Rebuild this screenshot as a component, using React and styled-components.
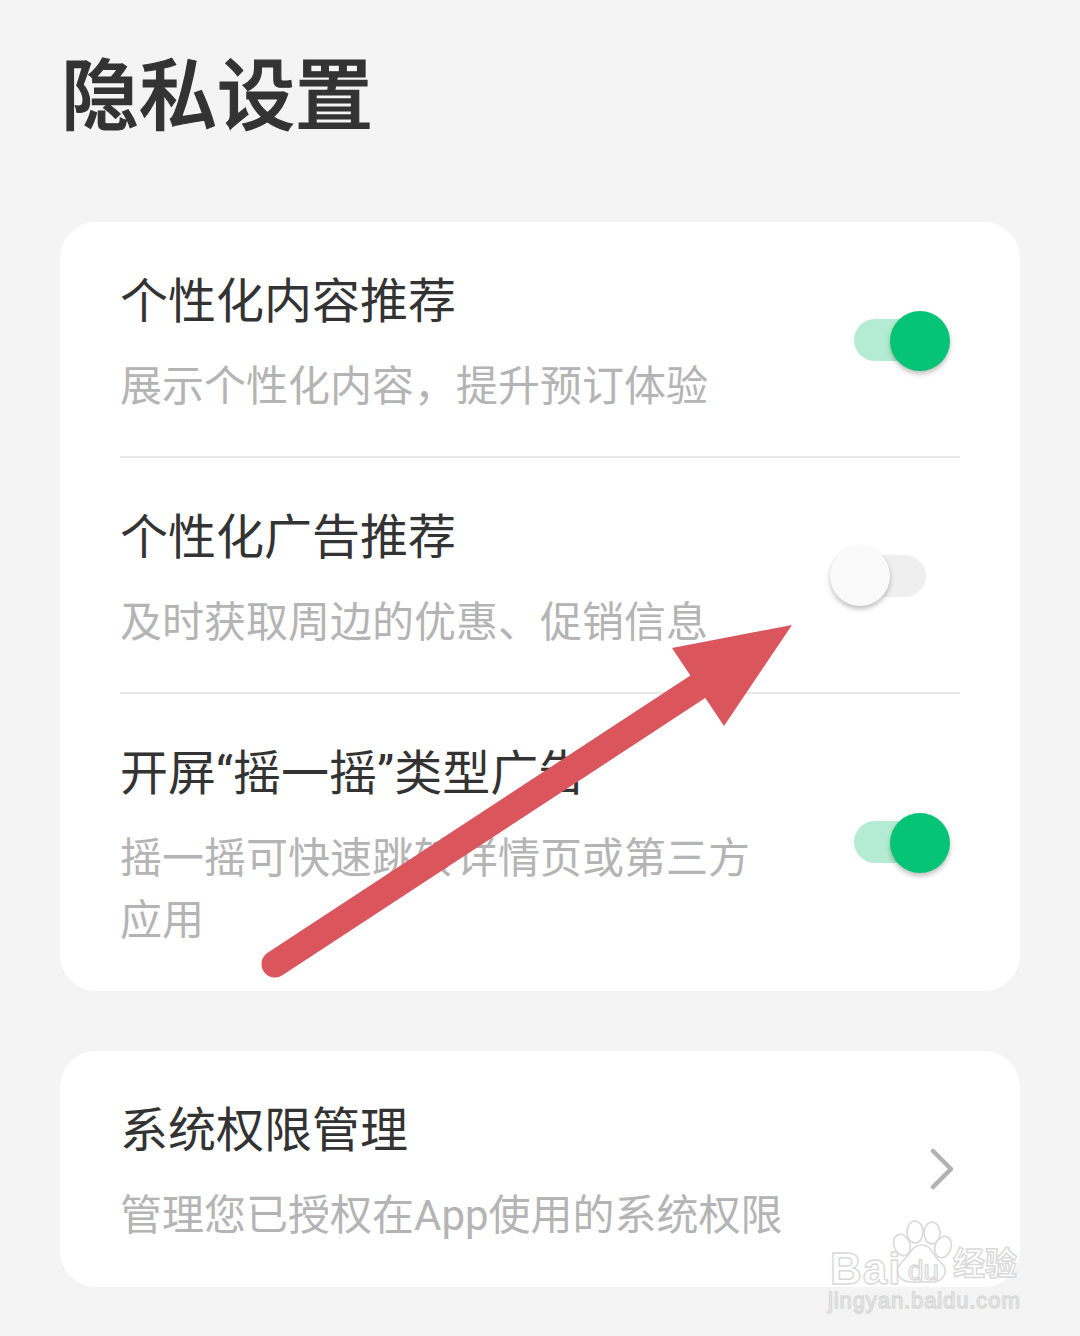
import React from 'react';
import styled, { createGlobalStyle } from 'styled-components';

const Global = createGlobalStyle`
  html, body { margin: 0; padding: 0; background: #f4f4f4; }
  * { box-sizing: border-box; }
`;

const Page = styled.div`
  position: relative;
  width: 1080px;
  height: 1336px;
  overflow: hidden;
  background: #f4f4f4;
  padding: 53px 60px 0;
  font-family: Roboto, "Noto Sans CJK SC", sans-serif;
`;

const PageTitle = styled.h1`
  margin: 0 0 0 1px;
  height: 169px;
  font-size: 78px;
  line-height: 90px;
  font-weight: 500;
  -webkit-text-stroke: 1.2px #333;
  color: #333;
`;

const Card = styled.section`
  background: #fff;
  border-radius: 36px;
  padding: 0 60px;
  margin-bottom: 60px;
`;

const Row = styled.div`
  display: flex;
  align-items: center;
  justify-content: space-between;
  border-bottom: ${p => (p.$last ? 'none' : '2px solid #e8e8e8')};
`;

const RowText = styled.div`
  width: 640px;
  flex: none;
  padding: 52px 0 ${p => p.$bottom}px;
`;

const RowTitle = styled.div`
  font-size: 48px;
  line-height: 56px;
  color: #333;
  white-space: nowrap;
`;

const RowSub = styled.div`
  margin-top: 26px;
  font-size: 42px;
  line-height: 62px;
  color: #b4b4b4;
  width: ${p => (p.$wide ? '700px' : '640px')};
`;

const Track = styled.div`
  position: relative;
  width: 72px;
  height: 42px;
  margin: ${p => (p.$lift ? '0 34px 2px 0' : '1px 34px 0 0')};
  border-radius: 21px;
  flex: none;
  background: ${p => (p.$on ? '#b3ecd2' : '#efefef')};
`;

const Knob = styled.div`
  position: absolute;
  top: ${p => (p.$on ? '-8px' : '-9px')};
  left: ${p => (p.$on ? '36px' : '-24px')};
  width: 60px;
  height: 60px;
  border-radius: 50%;
  background: ${p => (p.$on ? '#06c475' : '#fafafa')};
  box-shadow: 0 3px 5px rgba(0, 0, 0, 0.25);
`;

const Chevron = styled.svg`
  width: 28px;
  height: 44px;
  margin-right: 4px;
  flex: none;
`;

const ArrowLayer = styled.svg`
  position: absolute;
  left: 0;
  top: 0;
  width: 1080px;
  height: 1336px;
  pointer-events: none;
`;

const Watermark = styled.div`
  position: absolute;
  left: 826px;
  top: 1220px;
  width: 200px;
  height: 96px;
  pointer-events: none;
`;

const Paw = styled.svg`
  position: absolute;
  left: 62px;
  top: 0;
  width: 70px;
  height: 66px;
`;

const MarkText = styled.span`
  position: absolute;
  left: ${p => p.$x}px;
  top: ${p => p.$y}px;
  font-size: ${p => p.$size}px;
  line-height: 0.9;
  font-family: "Liberation Sans", "Noto Sans CJK SC", sans-serif;
  font-weight: ${p => p.$weight || 700};
  letter-spacing: ${p => p.$track || 0}px;
  color: rgba(255, 255, 255, 0.75);
  -webkit-text-stroke: 1.4px #d9d9d9;
  white-space: nowrap;
`;

const Switch = ({ on, lift }) => (
  <Track $on={on} $lift={lift}>
    <Knob $on={on} />
  </Track>
);

export default function App() {
  return (
    <Page>
      <Global />
      <PageTitle>隐私设置</PageTitle>
      <Card>
        <Row>
          <RowText $bottom={38}>
            <RowTitle>个性化内容推荐</RowTitle>
            <RowSub>展示个性化内容，提升预订体验</RowSub>
          </RowText>
          <Switch on />
        </Row>
        <Row>
          <RowText $bottom={38}>
            <RowTitle>个性化广告推荐</RowTitle>
            <RowSub>及时获取周边的优惠、促销信息</RowSub>
          </RowText>
          <Switch />
        </Row>
        <Row $last>
          <RowText $bottom={39}>
            <RowTitle>开屏“摇一摇”类型广告</RowTitle>
            <RowSub>摇一摇可快速跳转详情页或第三方应用</RowSub>
          </RowText>
          <Switch on lift />
        </Row>
      </Card>
      <Card>
        <Row $last>
          <RowText $bottom={40}>
            <RowTitle>系统权限管理</RowTitle>
            <RowSub $wide>管理您已授权在App使用的系统权限</RowSub>
          </RowText>
          <Chevron viewBox="0 0 28 44" fill="none">
            <path d="M5 4 L23 22 L5 40" stroke="#b2b2b2" strokeWidth="4.5" strokeLinecap="round" strokeLinejoin="round" />
          </Chevron>
        </Row>
      </Card>
      <ArrowLayer viewBox="0 0 1080 1336">
        <line x1="275" y1="964" x2="702" y2="684" stroke="#da565c" strokeWidth="27" strokeLinecap="round" />
        <path d="M792 625 L672 648 L724 726 Z" fill="#da565c" />
      </ArrowLayer>
      <Watermark>
        <Paw viewBox="0 0 70 66" fill="rgba(255,255,255,0.6)" stroke="#d9d9d9" strokeWidth="1.6">
          <ellipse cx="14" cy="25" rx="8" ry="11" transform="rotate(-20 14 25)" />
          <ellipse cx="27" cy="12" rx="8" ry="11" />
          <ellipse cx="44" cy="13" rx="8" ry="11" />
          <ellipse cx="55" cy="27" rx="8" ry="11" transform="rotate(20 55 27)" />
          <path d="M34 25 C44 25 44 35 52 42 C62 50 56 62 44 62 C38 62 30 62 24 62 C12 62 4 52 14 42 C22 35 24 25 34 25 Z" />
        </Paw>
        <MarkText $x={4} $y={29} $size={44} $track={1}>Bai</MarkText>
        <MarkText $x={82} $y={38} $size={28} $weight={400}>du</MarkText>
        <MarkText $x={127} $y={30} $size={32}>经验</MarkText>
        <MarkText $x={2} $y={71} $size={22} $weight={400} $track={0.9}>jingyan.baidu.com</MarkText>
      </Watermark>
    </Page>
  );
}
